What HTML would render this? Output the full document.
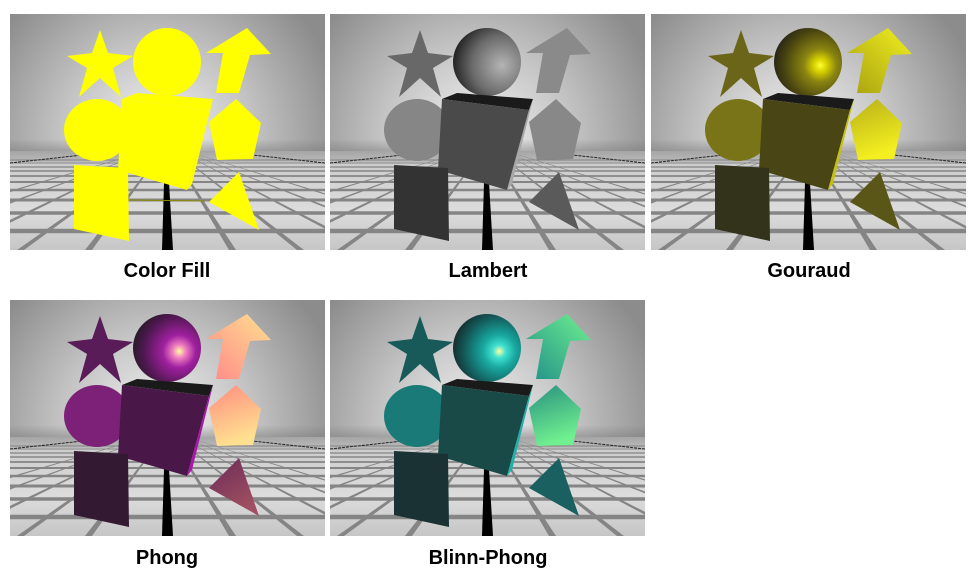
<!DOCTYPE html>
<html><head><meta charset="utf-8"><style>
html,body{margin:0;padding:0;background:#fff;width:977px;height:586px;overflow:hidden}
svg{display:block}
text{font-family:"Liberation Sans",Arial,sans-serif;font-weight:bold;font-size:20px;fill:#000}
</style></head><body>
<svg width="977" height="586" viewBox="0 0 977 586" xmlns="http://www.w3.org/2000/svg">
<defs>
<clipPath id="pc"><rect x="10" y="14" width="315" height="236"/></clipPath>
<clipPath id="gc"><rect x="10" y="151" width="315" height="99"/></clipPath>
<radialGradient id="sky" cx="157" cy="140" r="190" gradientUnits="userSpaceOnUse">
<stop offset="0" stop-color="#f4f4f4"/><stop offset="0.5" stop-color="#c4c4c4"/><stop offset="1" stop-color="#8c8c8c"/></radialGradient>
<linearGradient id="gnd" x1="0" y1="150" x2="0" y2="250" gradientUnits="userSpaceOnUse">
<stop offset="0" stop-color="#c8c8c8"/><stop offset="0.6" stop-color="#dcdcdc"/><stop offset="1" stop-color="#c6c6c6"/></linearGradient>
<linearGradient id="hz" x1="0" y1="139" x2="0" y2="162" gradientUnits="userSpaceOnUse">
<stop offset="0" stop-color="#777" stop-opacity="0"/><stop offset="0.5" stop-color="#777" stop-opacity="0.45"/><stop offset="1" stop-color="#777" stop-opacity="0.2"/></linearGradient>
<g id="bg">
<g clip-path="url(#pc)">
<rect x="10" y="14" width="315" height="236" fill="url(#sky)"/>
<g clip-path="url(#gc)">
<rect x="10" y="150" width="315" height="100" fill="url(#gnd)"/>
<g fill="#858585">
<polygon points="167,145 -193,250 -183,250"/><polygon points="167,145 -123,250 -114,250"/>
<polygon points="167,145 -53,250 -45,250"/><polygon points="167,145 17,250 24,250"/>
<polygon points="167,145 85,250 92,250"/><polygon points="167,145 163,250 170,250"/>
<polygon points="167,145 229,250 236,250"/><polygon points="167,145 297,250 304,250"/>
<polygon points="167,145 365,250 372,250"/><polygon points="167,145 433,250 441,250"/>
<polygon points="167,145 501,250 510,250"/>
</g>
<g stroke="#858585">
<line x1="10" x2="325" y1="160" y2="160" stroke-width="1"/>
<line x1="10" x2="325" y1="163" y2="163" stroke-width="1"/>
<line x1="10" x2="325" y1="167" y2="167" stroke-width="1.3"/>
<line x1="10" x2="325" y1="171" y2="171" stroke-width="1.5"/>
<line x1="10" x2="325" y1="176" y2="176" stroke-width="1.8"/>
<line x1="10" x2="325" y1="182" y2="182" stroke-width="2"/>
<line x1="10" x2="325" y1="190" y2="190" stroke-width="2.5"/>
<line x1="10" x2="325" y1="200" y2="200" stroke-width="3"/>
<line x1="10" x2="325" y1="213" y2="213" stroke-width="3.5"/>
<line x1="10" x2="325" y1="231" y2="231" stroke-width="4.5"/>
</g>
</g>
<rect x="10" y="139" width="315" height="23" fill="url(#hz)"/>
<g stroke="#222" stroke-width="1" stroke-dasharray="3,1">
<line x1="10" y1="163" x2="110" y2="152"/><line x1="325" y1="163" x2="225" y2="152"/></g>
<path d="M164 183 L169 183 L173 250 L162 250 Z" fill="#000"/>
</g></g>
<path id="star" d="M100 30 L108 53 L133 56 L113 68 L121 97 L100 78 L79 97 L87 68 L67 56 L92 53 Z"/>
<path id="arrow" d="M247 28 L271 54 L250 55 L239 93 L216 93 L223 53 L206 53 Z"/>
<ellipse id="ell" cx="97" cy="130" rx="33" ry="31"/>
<path id="pent" d="M236 99 L261 123 L253 159 L217 160 L209 122 Z"/>
<path id="tri" d="M239 172 L259 230 L209 202 Z"/>
<path id="sq" d="M74 165 L128 168 L129 241 L74 229 Z"/>
<path id="cf" d="M122 99 L209 110 L187 190 L118 170 Z"/>
<path id="ct" d="M122 99 L137 93 L213 99 L209 110 Z"/>
<path id="cr" d="M213 99 L209 110 L187 190 L192 184 Z"/>
<circle id="sph" cx="167" cy="62" r="34"/>

<radialGradient id="sL" cx="0.72" cy="0.55" r="0.8"><stop offset="0" stop-color="#b4b4b4"/><stop offset="0.55" stop-color="#6a6a6a"/><stop offset="0.95" stop-color="#1a1a1a"/></radialGradient>
<radialGradient id="sG" cx="0.68" cy="0.55" r="0.8"><stop offset="0" stop-color="#ffff30"/><stop offset="0.12" stop-color="#d8d000"/><stop offset="0.3" stop-color="#8a8510"/><stop offset="0.65" stop-color="#4a4510"/><stop offset="0.95" stop-color="#1a1a1a"/></radialGradient>
<radialGradient id="sP" cx="0.68" cy="0.55" r="0.8"><stop offset="0" stop-color="#ffffa0"/><stop offset="0.12" stop-color="#f080c0"/><stop offset="0.3" stop-color="#a020a0"/><stop offset="0.65" stop-color="#501850"/><stop offset="0.95" stop-color="#1a1a1a"/></radialGradient>
<radialGradient id="sB" cx="0.68" cy="0.55" r="0.8"><stop offset="0" stop-color="#ffffa0"/><stop offset="0.12" stop-color="#40e0d0"/><stop offset="0.3" stop-color="#18a8a0"/><stop offset="0.65" stop-color="#135858"/><stop offset="0.95" stop-color="#1a1a1a"/></radialGradient>
<linearGradient id="aG" x1="1" y1="0" x2="0" y2="1"><stop offset="0" stop-color="#f0f020"/><stop offset="1" stop-color="#a8a010"/></linearGradient>
<linearGradient id="pG" x1="0" y1="0" x2="0.3" y2="1"><stop offset="0" stop-color="#b8b018"/><stop offset="1" stop-color="#f4f020"/></linearGradient>
<linearGradient id="aP" x1="1" y1="0" x2="0" y2="1"><stop offset="0" stop-color="#ffe090"/><stop offset="1" stop-color="#ff8888"/></linearGradient>
<linearGradient id="pP" x1="0" y1="0" x2="0.3" y2="1"><stop offset="0" stop-color="#ff8c80"/><stop offset="1" stop-color="#ffe090"/></linearGradient>
<linearGradient id="tP" x1="0" y1="0" x2="0.5" y2="1"><stop offset="0" stop-color="#6a2a58"/><stop offset="1" stop-color="#a05060"/></linearGradient>
<linearGradient id="aB" x1="1" y1="0" x2="0" y2="1"><stop offset="0" stop-color="#70f090"/><stop offset="1" stop-color="#209088"/></linearGradient>
<linearGradient id="pB" x1="0" y1="0" x2="0.3" y2="1"><stop offset="0" stop-color="#28907f"/><stop offset="1" stop-color="#70f090"/></linearGradient>
</defs>

<!-- Panel 1: Color Fill -->
<g>
<use href="#bg"/>
<g fill="#ffff00">
<use href="#star"/><use href="#arrow"/><use href="#ell"/><use href="#pent"/><use href="#tri"/>
<use href="#sph"/><use href="#ct"/><use href="#cf"/><use href="#cr"/><use href="#sq"/>
</g>
<line x1="130" y1="200" x2="205" y2="201" stroke="#8a8a00" stroke-width="1"/>
</g>
<text x="167" y="277" text-anchor="middle">Color Fill</text>

<!-- Panel 2: Lambert -->
<g transform="translate(320,0)">
<use href="#bg"/>
<use href="#star" fill="#686868"/><use href="#arrow" fill="#8a8a8a"/><use href="#ell" fill="#868686"/>
<use href="#pent" fill="#888"/><use href="#tri" fill="#5a5a5a"/>
<use href="#sph" fill="url(#sL)"/><use href="#ct" fill="#1a1a1a"/><use href="#cf" fill="#4a4a4a"/><use href="#cr" fill="#a8a8a8"/>
<use href="#sq" fill="#333"/>
</g>
<text x="488" y="277" text-anchor="middle">Lambert</text>

<!-- Panel 3: Gouraud -->
<g transform="translate(641,0)">
<use href="#bg"/>
<use href="#star" fill="#6a6518"/><use href="#arrow" fill="url(#aG)"/><use href="#ell" fill="#7a7418"/>
<use href="#pent" fill="url(#pG)"/><use href="#tri" fill="#5a5618"/>
<use href="#sph" fill="url(#sG)"/><use href="#ct" fill="#1a1a1a"/><use href="#cf" fill="#4a4515"/><use href="#cr" fill="#c8c010"/>
<use href="#sq" fill="#33321a"/>
</g>
<text x="809" y="277" text-anchor="middle">Gouraud</text>

<!-- Panel 4: Phong -->
<g transform="translate(0,286)">
<use href="#bg"/>
<use href="#star" fill="#5a1c58"/><use href="#arrow" fill="url(#aP)"/><use href="#ell" fill="#7c2078"/>
<use href="#pent" fill="url(#pP)"/><use href="#tri" fill="url(#tP)"/>
<use href="#sph" fill="url(#sP)"/><use href="#ct" fill="#1a1a1a"/><use href="#cf" fill="#4a1848"/><use href="#cr" fill="#a818a8"/>
<use href="#sq" fill="#331a32"/>
</g>
<text x="167" y="564" text-anchor="middle">Phong</text>

<!-- Panel 5: Blinn-Phong -->
<g transform="translate(320,286)">
<use href="#bg"/>
<use href="#star" fill="#185a5a"/><use href="#arrow" fill="url(#aB)"/><use href="#ell" fill="#1a7a78"/>
<use href="#pent" fill="url(#pB)"/><use href="#tri" fill="#1a6060"/>
<use href="#sph" fill="url(#sB)"/><use href="#ct" fill="#1a1a1a"/><use href="#cf" fill="#1a4a48"/><use href="#cr" fill="#20b0a8"/>
<use href="#sq" fill="#1a3233"/>
</g>
<text x="488" y="564" text-anchor="middle">Blinn-Phong</text>
</svg>
</body></html>
